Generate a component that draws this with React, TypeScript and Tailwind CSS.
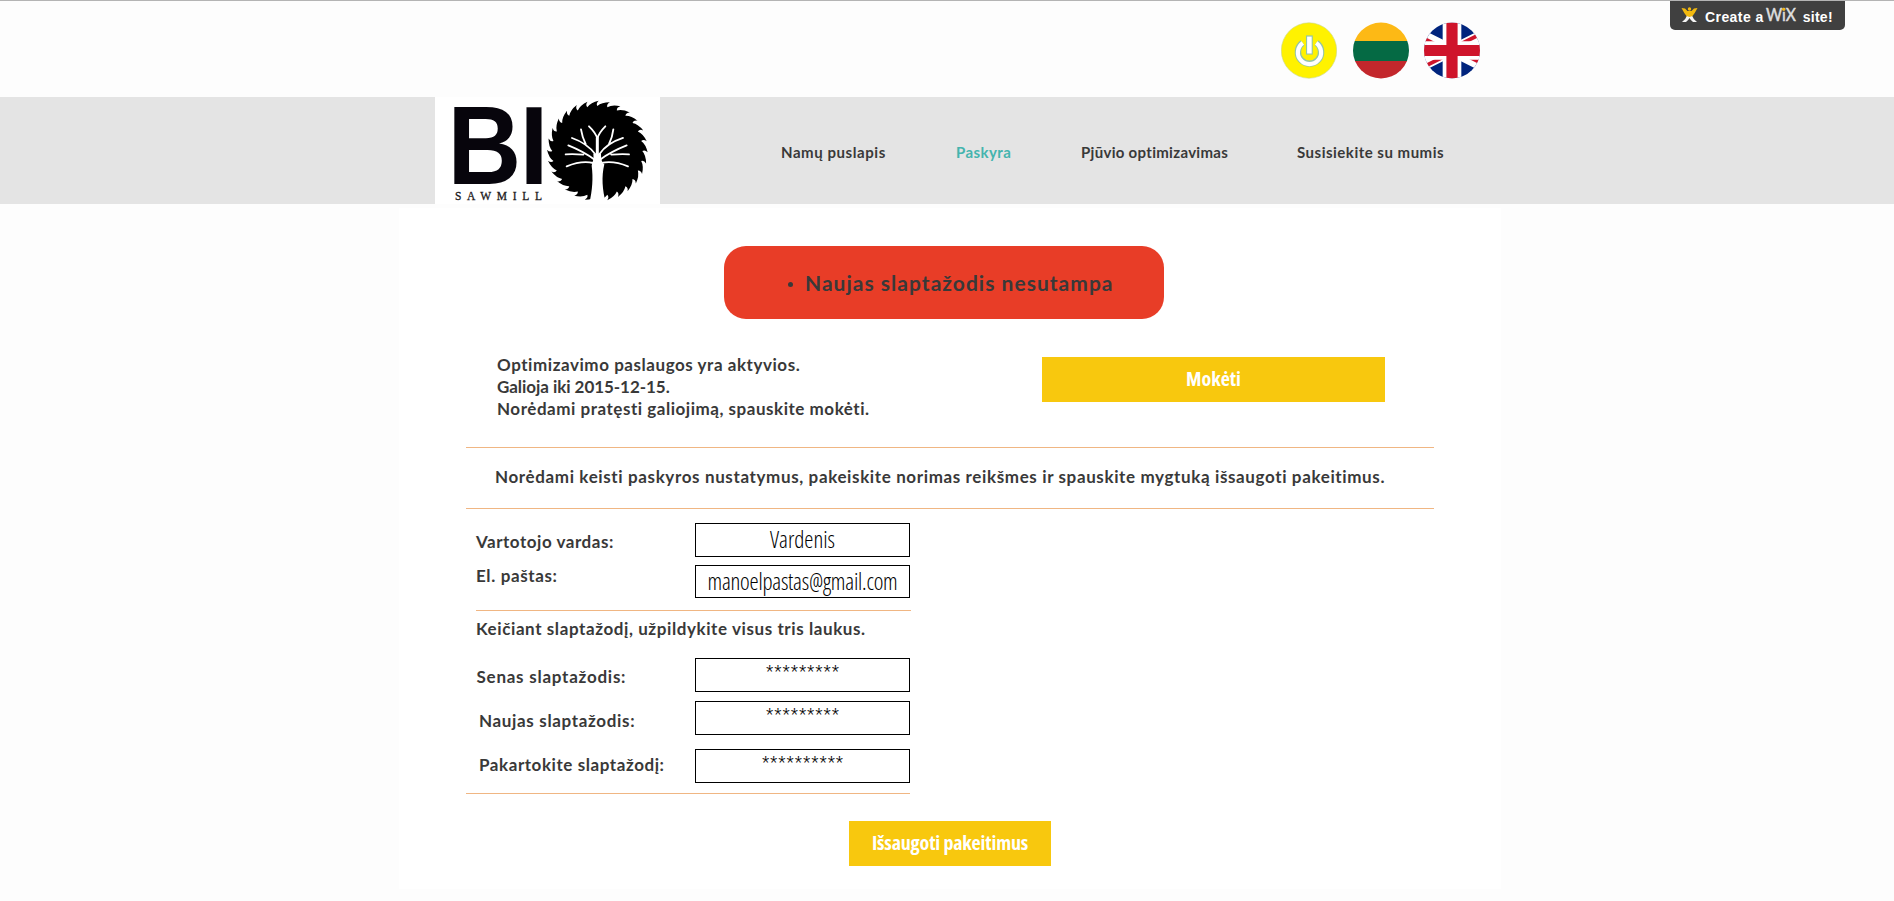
import type { ReactNode } from "react";

const TEETH = 28;

function sawPath(cx: number, cy: number, inner: number, outer: number): string {
  const point = (angle: number, radius: number) =>
    `${(cx + Math.cos(angle) * radius).toFixed(1)} ${(cy + Math.sin(angle) * radius).toFixed(1)}`;
  const step = (Math.PI * 2) / TEETH;
  let d = `M${point(0, inner)}`;
  for (let i = 0; i < TEETH; i++) {
    const a = i * step;
    d += ` Q${point(a + step * 0.4, outer - 4)} ${point(a + step * 1.12, outer)}`;
    d += ` Q${point(a + step * 0.85, inner + 8)} ${point(a + step, inner)}`;
  }
  return d + "Z";
}

function Logo() {
  return (
    <svg width="225" height="107" viewBox="0 0 225 107" className="block overflow-visible bg-white">
      <g fontFamily="Liberation Sans, sans-serif" fontWeight="700" fontSize="111" fill="#07050c">
        <text transform="translate(12.6 87) scale(0.92 1)">B</text>
        <text transform="translate(84.6 87) scale(0.94 1)">I</text>
      </g>
      <text
        x="20"
        y="103"
        textLength="87"
        fontFamily="Liberation Serif, serif"
        fontWeight="400"
        fontSize="11.5"
        fill="#1c1a20"
        stroke="#1c1a20"
        strokeWidth="0.3"
      >
        SAWMILL
      </text>
      <g transform="translate(105 -2) scale(0.3333)">
        <path d={sawPath(172, 168, 135, 151)} fill="#000" />
        <path
          d="M160 176 H183 C183 194 186 202 193 208 C184 245 187 285 198 325 H148 C157 285 160 250 155 212 C158 200 162 192 160 176Z"
          fill="#fff"
        />
        <g fill="none" stroke="#fff" strokeWidth="5.5" strokeLinecap="round">
          <path d="M147 94 Q166 112 172 130 Q178 112 196 94" />
          <path d="M172 200 V128" strokeWidth="9" />
          <path d="M166 178 Q142 145 96 129 M123 103 Q127 128 137 147" />
          <path d="M178 178 Q200 145 249 129 M220 103 Q217 128 207 147" />
          <path d="M164 194 Q132 170 85 151 M77 178 Q100 176 130 179" />
          <path d="M180 194 Q212 170 260 151 M267 178 Q244 176 214 179" />
          <path d="M160 204 Q124 196 80 214 M184 204 Q220 196 264 214" />
        </g>
      </g>
    </svg>
  );
}

function PowerIcon() {
  return (
    <svg width="56" height="57" viewBox="0 0 56 57" className="block">
      <circle cx="28" cy="28.5" r="27.7" fill="#fff200" stroke="#c9d68a" strokeWidth="0.6" />
      <g fill="none">
        <path d="M21.5 20.8 A11.6 11.6 0 1 0 35.5 20.8" stroke="#93c4a6" strokeWidth="6.4" />
        <path d="M28.4 13.4 V32.6" stroke="#93c4a6" strokeWidth="6.8" />
        <path d="M21.8 21 A11.6 11.6 0 1 0 35.2 21" stroke="#fff" strokeWidth="4.2" />
        <path d="M28.4 14.6 V31.5" stroke="#fff" strokeWidth="4.6" />
      </g>
    </svg>
  );
}

function LithuanianFlag() {
  return (
    <svg width="56" height="57" viewBox="0 0 56 57" className="block">
      <clipPath id="lt">
        <circle cx="28" cy="28.5" r="28" />
      </clipPath>
      <g clipPath="url(#lt)">
        <path d="M0 0H56V19H0Z" fill="#fdb915" />
        <path d="M0 19H56V39H0Z" fill="#056a44" />
        <path d="M0 39H56V57H0Z" fill="#c3272c" />
      </g>
    </svg>
  );
}

function BritishFlag() {
  return (
    <svg width="56" height="57" viewBox="15 0 30 30" className="block">
      <clipPath id="gb">
        <circle cx="30" cy="15" r="15" />
      </clipPath>
      <clipPath id="gb-diagonals">
        <path d="M30 15H60V30ZM30 15V30H0ZM30 15H0V0ZM30 15V0H60Z" />
      </clipPath>
      <g clipPath="url(#gb)">
        <path d="M0 0H60V30H0Z" fill="#00247d" />
        <path d="M0 0L60 30M60 0L0 30" stroke="#fff" strokeWidth="6" />
        <path d="M0 0L60 30M60 0L0 30" stroke="#cf142b" strokeWidth="4" clipPath="url(#gb-diagonals)" />
        <path d="M30 0V30M0 15H60" stroke="#fff" strokeWidth="10" />
        <path d="M30 0V30M0 15H60" stroke="#cf142b" strokeWidth="6" />
      </g>
    </svg>
  );
}

function WixBadge() {
  return (
    <div className="ml-[190px] flex h-[29px] w-[175px] items-start rounded-b-[5px] bg-[#404040] pl-[11px] font-['Liberation_Sans',sans-serif] text-[14px] leading-[22px] font-bold text-white">
      <svg width="17" height="16" viewBox="0 0 17 16" className="mt-[6px] block">
        <path d="M1 15 Q5 12 6 8.5 L11 8.5 Q12 12 16 15 L12 15 Q9.500 13 8.500 11 Q7.500 13 5 15Z" fill="#f4f4f4" />
        <path d="M0.500 1 L4 1.500 L6.500 4 H10.500 L13 1.500 L16.500 1 Q14 6 11.500 9 L8.500 10 L5.500 9 Q3 6 0.500 1Z" fill="#f2b90f" />
        <circle cx="8.500" cy="2" r="1.700" fill="#f2b90f" />
      </svg>
      <span className="mt-[5px] ml-[7px] tracking-[0.42px]">Create a</span>
      <svg width="33" height="28" viewBox="0 0 33 28" className="ml-[1px] block overflow-visible">
        <text
          x="1"
          y="20"
          textLength="30"
          lengthAdjust="spacingAndGlyphs"
          fontFamily="Lato, sans-serif"
          fontWeight="400"
          fontSize="16.5"
          fill="#dedede"
          stroke="#dedede"
          strokeWidth="0.5"
        >
          WiX
        </text>
        <circle cx="18.600" cy="8.200" r="1.500" fill="#f2b90f" />
      </svg>
      <span className="mt-[5px] ml-[5px] tracking-[0.3px]">site!</span>
    </div>
  );
}

function Field({ label, value, labelClass, boxClass }: { label: string; value: string; labelClass: string; boxClass: string }) {
  return (
    <div className="flex items-start justify-between">
      <span className={`block whitespace-nowrap ${labelClass}`}>{label}</span>
      <div
        className={`w-[215px] border border-black bg-white text-center font-['Open_Sans',sans-serif] text-[23px] leading-[30px] font-light text-black [font-stretch:75%] ${boxClass}`}
      >
        {value}
      </div>
    </div>
  );
}

function YellowButton({ className, children }: { className: string; children: ReactNode }) {
  return (
    <button
      type="button"
      className={`block h-[45px] bg-[#f8c80e] pb-[1px] font-['Open_Sans',sans-serif] text-[20px] leading-[28px] font-bold text-white [font-stretch:75%] ${className}`}
    >
      {children}
    </button>
  );
}

export default function App() {
  return (
    <div className="h-[901px] w-[1894px] overflow-hidden bg-[#fdfdfd] font-['Lato',sans-serif] text-[17px] leading-[22px] font-bold text-[#393939]">
      <header className="flex h-[97px] items-start border-t border-[#b4b4b4] pl-[1281px]">
        <div className="flex pt-[21px]">
          <PowerIcon />
          <div className="ml-[16px]">
            <LithuanianFlag />
          </div>
          <div className="ml-[15px]">
            <BritishFlag />
          </div>
        </div>
        <WixBadge />
      </header>

      <div className="flex h-[107px] bg-[#e4e4e4] pl-[435px]">
        <Logo />
        <nav className="flex pt-[45px] text-[15px] leading-[20px] whitespace-nowrap">
          <a className="ml-[121px] w-[175px] tracking-[0.57px]">Namų puslapis</a>
          <a className="w-[125px] tracking-[0.42px] text-[#45b4ae]">Paskyra</a>
          <a className="w-[216px] tracking-[0.3px]">Pjūvio optimizavimas</a>
          <a className="tracking-[0.5px]">Susisiekite su mumis</a>
        </nav>
      </div>

      <main className="mt-[4px] ml-[399px] h-[681px] w-[1102px] bg-white pt-[38px]">
        <div className="ml-[325px] flex h-[73px] w-[440px] items-center rounded-[22px] bg-[#e83d27] pb-[1px] pl-[64px] text-[21px] leading-[25px]">
          <span className="mt-[4px] block size-[5px] rounded-full bg-[#393939]" />
          <span className="ml-[12px] tracking-[1.02px] whitespace-nowrap">Naujas slaptažodis nesutampa</span>
        </div>

        <div className="ml-[67px] flex h-[129px] w-[968px] items-start border-b border-[#f0b683] pl-[31px] whitespace-nowrap">
          <div className="w-[545px] pt-[35px]">
            <p className="tracking-[0.55px]">Optimizavimo paslaugos yra aktyvios.</p>
            <p className="tracking-[-0.05px]">Galioja iki 2015-12-15.</p>
            <p className="tracking-[0.53px]">Norėdami pratęsti galiojimą, spauskite mokėti.</p>
          </div>
          <YellowButton className="mt-[38px] w-[343px]">Mokėti</YellowButton>
        </div>

        <div className="ml-[67px] flex h-[61px] w-[968px] items-center border-b border-[#f0b683] pb-[2px] pl-[29px] whitespace-nowrap">
          <p className="tracking-[0.625px]">
            Norėdami keisti paskyros nustatymus, pakeiskite norimas reikšmes ir spauskite mygtuką išsaugoti pakeitimus.
          </p>
        </div>

        <div className="ml-[67px] h-[285px] w-[444px] border-b border-[#f0b683] pt-[14px] pl-[9px]">
          <Field label="Vartotojo vardas:" value="Vardenis" labelClass="pt-[8px] pl-[1px] tracking-[0.53px]" boxClass="h-[34px]" />
          <div className="h-[8px]" />
          <Field
            label="El. paštas:"
            value="manoelpastas@gmail.com"
            labelClass="pl-[1px] tracking-[0.63px]"
            boxClass="h-[33px] tracking-[-0.21px]"
          />
          <div className="mt-[12px] ml-[1px] h-[1px] w-[435px] bg-[#f0b683]" />
          <p className="mt-[7px] pl-[1px] tracking-[0.59px] whitespace-nowrap">Keičiant slaptažodį, užpildykite visus tris laukus.</p>
          <div className="h-[18px]" />
          <Field label="Senas slaptažodis:" value="*********" labelClass="pt-[8px] pl-[1.5px] tracking-[0.75px]" boxClass="h-[34px] tracking-[-0.08px]" />
          <div className="h-[9px]" />
          <Field label="Naujas slaptažodis:" value="*********" labelClass="pt-[9px] pl-[4px] tracking-[0.66px]" boxClass="h-[34px] tracking-[-0.08px]" />
          <div className="h-[14px]" />
          <Field label="Pakartokite slaptažodį:" value="**********" labelClass="pt-[5px] pl-[4px] tracking-[0.57px]" boxClass="h-[34px] tracking-[-0.08px]" />
        </div>

        <YellowButton className="mt-[27px] ml-[450px] w-[202px] tracking-[-0.18px]">Išsaugoti pakeitimus</YellowButton>
      </main>
    </div>
  );
}
